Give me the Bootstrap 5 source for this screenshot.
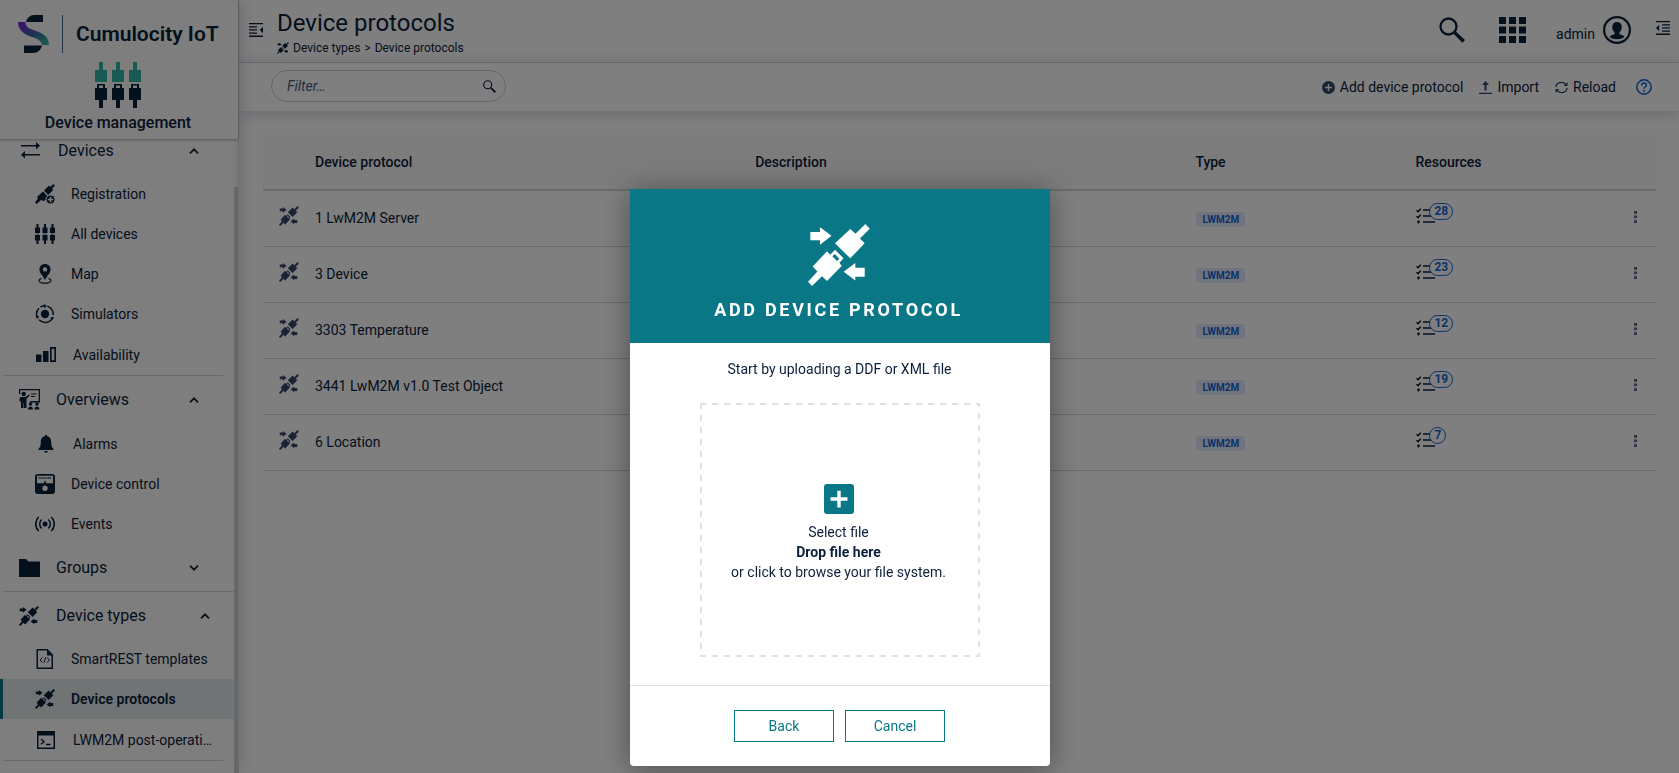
<!DOCTYPE html>
<html lang="en">
<head>
<meta charset="utf-8">
<meta name="viewport" content="width=device-width, initial-scale=1">
<title>Device protocols - Cumulocity IoT</title>
<link href="https://cdn.jsdelivr.net/npm/bootstrap@5.3.0/dist/css/bootstrap.min.css" rel="stylesheet">
<style>
  :root { --ink: #0b213b; --muted: #34496b; --teal: #0a7787; --line: #dcdee5; --blue: #1264d0; }
  body { font-family: Roboto, "Liberation Sans", sans-serif; font-size: 14px; line-height: 20px; color: var(--ink); height: 100vh; overflow: hidden; background: #fff; }
  svg { display: block; fill: currentColor; flex: none; }
  a { color: inherit; text-decoration: none; }
  button { color: inherit; }

  /* navigator */
  .navigator { width: 239px; border-right: 1px solid #d5d8e4; box-shadow: 0 0 16px rgba(30,50,90,.22); z-index: 3; background: #fdfdfd; }
  .brand-block { height: 139px; padding: 15px 2px 0 0; box-shadow: 0 1px 3px rgba(0,0,0,.3); z-index: 1; position: relative; }
  .brand-line { height: 38px; padding-left: 18px; gap: 13px; }
  .brand-line .rule { width: 1px; height: 38px; background: #45698f; }
  .brand-name { font-size: 21px; line-height: 34px; font-weight: 600; }
  .app-name { font-size: 16px; line-height: 24px; font-weight: 500; margin-top: 3px; }
  .nav-scroll { overflow: hidden; padding: 38px 0 12px; }
  .track { width: 4px; padding-top: 48px; background: #f4f5f9; }
  .thumb { background: #cccfd6; height: 100%; }
  .group-head { height: 47px; font-size: 16px; padding: 0 24px 0 16px; border: 0; background: none; width: 100%; text-align: left; }
  .group-head .pic { width: 37px; }
  .group-head .pic.inset { width: 39px; padding-left: 2px; }
  .nav-group { border-bottom: 1px solid #d4d5d9; margin: 0 11px 0 3px; }
  .nav-group.wide { margin-right: 0; }
  .nav-group.wide .group-head { padding-right: 35px; }
  .nav-group.wide + .nav-group .group-head { padding-right: 13px; }
  .nav-entry { height: 40px; padding-left: 35px; margin-left: -3px; margin-right: -11px; }
  .nav-group.wide .nav-entry { margin-right: 0; }
  .nav-entry .pic { width: 36px; }
  .nav-entry.tall { height: 41px; padding-left: 36px; }
  .nav-entry.tall .pic { width: 37px; }
  .nav-entry.current { background: #e0e8ea; border-left: 3px solid var(--teal); padding-left: 32px; font-weight: 600; }

  /* header and toolbar */
  .app-header { height: 63px; border-bottom: 1px solid var(--line); padding: 0 9px 2px 10px; }
  .drawer-left { margin-right: 14px; padding-bottom: 2px; }
  .tools { gap: 34px; padding-right: 30px; }
  .account { margin-right: 25px; }
  .page-title { font-size: 24px; line-height: 30px; font-weight: 400; margin: 8px 0 0; }
  .crumbs { font-size: 12px; line-height: 20px; }
  .icon-btn { background: none; border: 0; padding: 0; }
  .toolbar { height: 48px; padding: 0 27px 0 32px; box-shadow: 0 2px 14px rgba(30,50,90,.22); z-index: 1; position: relative; background: #fff; }
  .filter { width: 235px; height: 32px; border: 1px solid #c8ccda; border-radius: 16px; padding: 0 9px 0 15px; margin-top: -2px; }
  .filter input { border: 0; outline: 0; background: none; min-width: 0; padding: 0; }
  .filter input::placeholder { font-style: italic; color: #45607f; opacity: 1; }
  .action { gap: 5px; }
  .help { margin-left: 20px; color: var(--blue); }
  .action svg, .row-icon { color: var(--muted); }

  /* table */
  .content { padding: 24px 23px 0 24px; background: #fff; }
  .protocols { table-layout: fixed; margin: 0; --bs-table-bg: transparent; color: var(--ink); }
  .protocols .c-icon { width: 36px; }
  .protocols .c-wide { width: 31.6%; }
  .protocols .c-small { width: 15.8%; }
  .protocols > :not(caption) > * > * { padding: 0 16px; height: 56px; vertical-align: middle; border-bottom: 1px solid #d4d6dc; color: var(--ink); }
  .protocols > thead > tr > th { height: 55px; font-weight: 500; border-bottom: 2px solid #d3d3e0; background: #f9f9f9; }
  .protocols > tbody > tr > td:last-child, .protocols > tbody > tr > td:first-child { padding-right: 0; }
  .protocols > tbody > tr > td:last-child { padding-left: 14px; }
  .kind { font-size: 10px; line-height: 15px; font-weight: 700; color: var(--blue); background: #e0e9f8; border-radius: 3px; padding: 0 6px; display: inline-block; margin-left: 1px; }
  .res { width: 20px; height: 16px; position: relative; margin: -4px 0 0 1px; }
  .count { position: absolute; left: 13px; top: -5px; height: 17px; min-width: 16px; border: 1px solid var(--blue); border-radius: 9px; background: #fff; color: var(--blue); font-size: 12px; line-height: 15px; font-weight: 700; padding: 0 4px; text-align: center; }
  .more { color: #5a6a85; }

  /* dialog */
  .modal-dialog { width: 420px; max-width: 420px; margin-top: 189px; margin-bottom: 0; }
  .modal-content { border: 0; border-radius: 0 0 4px 4px; box-shadow: 0 3px 30px rgba(0,0,0,.4); color: var(--ink); }
  .modal-header { height: 154px; background: var(--teal); color: #fff; padding: 35px 2px 0 0; border: 0; border-radius: 0; gap: 12px; }
  .modal-title { font-size: 18px; line-height: 24px; font-weight: 700; letter-spacing: .15em; text-transform: uppercase; }
  .modal-body { padding: 16px 70px 28px; }
  .drop { height: 254px; margin-top: 24px; padding: 5px 2px 0 0; cursor: pointer; }
  .modal-footer { height: 81px; border-top: 1px solid #dfe1e7; padding: 0; gap: 11px; }
  .modal-footer .btn { --bs-btn-color: var(--teal); --bs-btn-border-color: var(--teal); --bs-btn-hover-bg: var(--teal); --bs-btn-hover-color: #fff; width: 100px; height: 32px; border-radius: 0; margin: 0; padding: 0; font-size: 14px; line-height: 20px; }
</style>
</head>
<body class="d-flex">

<svg width="0" height="0" class="position-absolute" aria-hidden="true">
  <symbol id="i-protocol" viewBox="0 0 62 62">
    <path fill-rule="evenodd" d="M2.3 8H12V3.3l11.5 8.5L12 20.7v-4.4H2.3zM42.3 5l5.2 4.8L57.3 0l4.5 4.7-9.9 9.8 4.8 4.8-14.4 15L27 19.3zM19 27.3l3.3 3.4 4.7-5 8.5 8.6-4 4.5 2.2 3.2L19 57l-5-4.7L4 62l-4-4.2 9.4-10.4-4.7-5zM26.7 30l-2.4 2.3 4.7 4.8 2.4-2.4zM56.7 43.7h-9.4V39l-11.6 8.7 11.6 8.7v-3.7h9.4z"/>
  </symbol>
  <symbol id="i-up" viewBox="0 0 10 6"><path d="M1 5.3l4-4 4 4" fill="none" stroke="currentColor" stroke-width="1.7"/></symbol>
  <symbol id="i-down" viewBox="0 0 10 6"><path d="M1 .7l4 4 4-4" fill="none" stroke="currentColor" stroke-width="1.7"/></symbol>
  <symbol id="i-search" viewBox="0 0 26 26"><circle cx="9.5" cy="9.500" r="8" fill="none" stroke="currentColor" stroke-width="2.300"/><path d="M14.500 16.800l2.300-2.300L26 23l-2.600 2.800z"/></symbol>
  <symbol id="i-list" viewBox="0 0 20 16"><path d="M7 2h12M7 8h12M7 14h12" stroke="currentColor" stroke-width="1.6"/><path d="M.5 2.2l1.6 1.4L4.8.8M.5 8.2l1.6 1.4 2.7-2.8" fill="none" stroke="currentColor" stroke-width="1.5"/><circle cx="2.5" cy="14" r="1.4"/></symbol>
  <symbol id="i-dots" viewBox="0 0 3 12"><path d="M0 0h3v2.7H0zM0 4.6h3v2.7H0zM0 9.2h3v2.7H0z"/></symbol>
  <symbol id="i-drawer" viewBox="0 0 14 14"><path d="M0 0h14v1.3H0zM0 3.2h8v1.300H0zM0 6.3h8v1.300H0zM0 9.4h8v1.300H0zM0 12.6h14v1.3H0zM14 3.800v6.400L10.800 7z"/></symbol>
</svg>

<aside class="navigator d-flex flex-column flex-shrink-0">
  <div class="brand-block flex-shrink-0">
    <div class="brand-line d-flex align-items-center">
      <svg width="31" height="38" viewBox="0 0 31 38" aria-hidden="true">
        <defs><linearGradient id="wave" x1="0" y1="0" x2="1" y2="1"><stop offset="0" stop-color="#7a1fe0"/><stop offset=".5" stop-color="#4063a8"/><stop offset="1" stop-color="#2fc09a"/></linearGradient></defs>
        <path d="M8 7C9 3 12 0 16 0h9v7z"/>
        <path d="M0 7h7.500c0 5 3.500 6.500 8 8C24 18 31 21 31 30h-7c-1-5-5-6.500-10-8C6 19.500 0 15 0 7z" fill="url(#wave)"/>
        <path d="M6 30.500h18c-1 4-4 7.500-9 7.500H6z"/>
      </svg>
      <span class="rule"></span>
      <span class="brand-name">Cumulocity IoT</span>
    </div>
    <svg class="mx-auto mt-2" width="46" height="47" viewBox="0 0 46 47" aria-hidden="true">
      <g fill="#2fb6a6"><path d="M0 9h4V1h4v8h4v12H0zM17 9h4V1h4v8h4v12H17zM34 9h4V1h4v8h4v12H34z"/></g>
      <path fill-rule="evenodd" d="M0 27h2v-4h8v4h2v12H8v8H4v-8H0zM4 24.500V27h4v-2.500zM17 27h2v-4h8v4h2v12h-4v8h-4v-8h-4zM21 24.500V27h4v-2.500zM34 27h2v-4h8v4h2v12h-4v8h-4v-8h-4zM38 24.500V27h4v-2.500z"/>
    </svg>
    <div class="app-name text-center">Device management</div>
  </div>

  <div class="d-flex flex-grow-1 overflow-hidden">
    <nav class="nav-scroll flex-grow-1" id="nav" aria-label="Main">
      <div class="nav-group">
        <button class="group-head d-flex align-items-center" type="button" aria-expanded="true">
          <span class="pic inset"><svg width="19" height="17" viewBox="0 0 19 17"><path d="M0 3h15V0l4 3.700L15 7.500V4.500H0zM19 12H4V9l-4 3.800 4 3.700v-3h15z"/></svg></span>
          <span class="flex-grow-1">Devices</span><svg width="10" height="6"><use href="#i-up"/></svg>
        </button>
        <a href="#" class="nav-entry d-flex align-items-center"><span class="pic">
          <svg width="20" height="20" viewBox="0 0 20 20"><path d="M18.500 0L20 1.500l-2.800 3 1 1.500-5 5L9 6.500l4.800-4.800 1.700 1zM8 7.500l4 4.300-1 4-3 1.500-1.500-1.500L1.500 20 0 18.500l3-4L2 13z"/><circle cx="15.500" cy="15.500" r="4.500" stroke="#fdfdfd"/><path d="M15.500 12.800v5.400M12.800 15.500h5.400" stroke="#fdfdfd" stroke-width="1.600"/></svg></span>Registration</a>
        <a href="#" class="nav-entry d-flex align-items-center"><span class="pic">
          <svg width="20" height="20" viewBox="0 0 20 20"><path d="M0 3.500h1.500V0h2v3.500H5V9H0zM7.500 3.500H9V0h2v3.500h1.500V9h-5zM15 3.500h1.500V0h2v3.500H20V9h-5zM0 11h5v5.500H3.500V20h-2v-3.500H0zM7.500 11h5v5.500H11V20H9v-3.500H7.500zM15 11h5v5.500h-1.500V20h-2v-3.500H15z"/><path d="M1 10h3M8.500 10h3M16 10h3" stroke="currentColor" stroke-width=".7"/></svg></span>All devices</a>
        <a href="#" class="nav-entry d-flex align-items-center"><span class="pic">
          <svg width="20" height="20" viewBox="0 0 20 20"><path fill-rule="evenodd" d="M10 0c3.200 0 5.600 2.400 5.600 5.500C15.600 9 12 11.500 10 16c-2-4.500-5.600-7-5.600-10.500C4.400 2.400 6.800 0 10 0zm0 3.200a2.200 2.200 0 100 4.400 2.200 2.200 0 000-4.400z"/><path d="M6.500 14.300C2.500 15.500 3.500 19.200 10 19.200s7.500-3.700 3.500-4.900" fill="none" stroke="currentColor" stroke-width="1.300"/></svg></span>Map</a>
        <a href="#" class="nav-entry d-flex align-items-center"><span class="pic">
          <svg width="20" height="20" viewBox="0 0 20 20"><circle cx="10" cy="10" r="4.200"/><g fill="none" stroke="currentColor" stroke-width="1.500"><path d="M2.200 13A8.200 8.200 0 014 4.200M5.500 3A8.300 8.300 0 0110 1.800M12.500 2.200a8.200 8.200 0 015.600 9M17.500 14A8.300 8.300 0 014 15.800"/></g><path d="M9 0l3 2-3 2.300zM.500 12l3.500.3-1.700 3zM15.500 13l4 .5-3 3z"/></svg></span>Simulators</a>
        <a href="#" class="nav-entry tall d-flex align-items-center"><span class="pic">
          <svg width="20" height="15" viewBox="0 0 20 15"><path fill-rule="evenodd" d="M0 7.500h5.500V15H0zM7 4h5.500v11H7zM14 0h6v15h-6zM15.700 1.700v11.600h2.600V1.700z"/></svg></span>Availability</a>
      </div>

      <div class="nav-group wide">
        <button class="group-head d-flex align-items-center" type="button" aria-expanded="true">
          <span class="pic"><svg width="21" height="21" viewBox="0 0 21 21"><path fill-rule="evenodd" d="M0 0h21v13.500h-10V12h8.700V1.300H1.300V5H0z"/><circle cx="4.700" cy="5" r="2.200"/><path d="M1.500 8h5l3.500-2.500.8 1-3.300 3.300V19H5v-5h-.5v5H2v-6.500H.500V9.500zM12 4.500h5.500v1H12zM12 7h4v1h-4z"/><circle cx="11.500" cy="15" r="1.700"/><circle cx="18" cy="15" r="1.700"/><path d="M9 20.500c0-4 5-4 5 0zM15.500 20.500c0-4 5-4 5 0z"/></svg></span>
          <span class="flex-grow-1">Overviews</span><svg width="10" height="6"><use href="#i-up"/></svg>
        </button>
        <a href="#" class="nav-entry tall d-flex align-items-center"><span class="pic">
          <svg width="20" height="20" viewBox="0 0 20 20"><path d="M10 1c.8 0 1.300.5 1.300 1.300C14 3 15.200 5 15.200 8c0 4 .8 5.500 2.300 7v1h-15v-1C4 13.500 4.800 12 4.800 8c0-3 1.200-5 3.900-5.700C8.700 1.500 9.200 1 10 1zM8.200 17h3.600c0 2.300-3.600 2.300-3.600 0z"/></svg></span>Alarms</a>
        <a href="#" class="nav-entry d-flex align-items-center"><span class="pic">
          <svg width="20" height="20" viewBox="0 0 20 20"><path fill-rule="evenodd" d="M3 0h14a3 3 0 013 3v14a3 3 0 01-3 3H3a3 3 0 01-3-3V3a3 3 0 013-3zM2 1.800v7.400h6.500L10 6.500l1.500 2.700H18V1.800zM10 11.500a2.700 2.700 0 100 5.400 2.700 2.700 0 000-5.400z"/><path d="M3.500 4h13" stroke="currentColor" stroke-width="1.600" stroke-dasharray="1.200 .7"/></svg></span>Device control</a>
        <a href="#" class="nav-entry d-flex align-items-center"><span class="pic">
          <svg width="20" height="16" viewBox="0 0 20 16"><circle cx="10" cy="8" r="2.500"/><g fill="none" stroke="currentColor" stroke-width="1.600"><path d="M6.700 3.500a6 6 0 000 9M13.300 3.500a6 6 0 010 9M3.600 1a10 10 0 000 14M16.400 1a10 10 0 010 14"/></g></svg></span>Events</a>
        <button class="group-head d-flex align-items-center" type="button" aria-expanded="false">
          <span class="pic"><svg width="21" height="18" viewBox="0 0 21 18"><path d="M0 0h7l2.500 2.500H21V18H0z"/></svg></span>
          <span class="flex-grow-1">Groups</span><svg width="10" height="6"><use href="#i-down"/></svg>
        </button>
      </div>

      <div class="nav-group">
        <button class="group-head d-flex align-items-center" type="button" aria-expanded="true">
          <span class="pic"><svg width="20" height="20"><use href="#i-protocol"/></svg></span>
          <span class="flex-grow-1">Device types</span><svg width="10" height="6"><use href="#i-up"/></svg>
        </button>
        <a href="#" class="nav-entry d-flex align-items-center"><span class="pic">
          <svg width="20" height="20" viewBox="0 0 20 20"><path fill-rule="evenodd" d="M1.500 0h11l5.500 5.500V20H1.500zM3 1.500v17h13.500v-12H12v-5z"/><path d="M7.300 8.500L5.200 11l2.100 2.500M12.200 8.500l2.100 2.500-2.100 2.500M10.500 8.200l-1.500 5.600" fill="none" stroke="currentColor"/></svg></span><span class="text-nowrap">SmartREST templates</span></a>
        <a href="#" class="nav-entry current d-flex align-items-center" aria-current="page"><span class="pic">
          <svg width="20" height="20"><use href="#i-protocol"/></svg></span>Device protocols</a>
        <a href="#" class="nav-entry tall d-flex align-items-center"><span class="pic">
          <svg width="19" height="18" viewBox="0 0 19 18"><path fill-rule="evenodd" d="M1 0h18v18H1zM2.500 4.500v12h15v-12z"/><path d="M5 8l3 2.700-3 2.600M10 13.500h4.500" fill="none" stroke="currentColor" stroke-width="1.400"/></svg></span><span class="text-nowrap">LWM2M post-operati…</span></a>
      </div>
    </nav>
    <div class="track flex-shrink-0"><div class="thumb"></div></div>
  </div>
</aside>

<main class="flex-grow-1 d-flex flex-column overflow-hidden">
  <header class="app-header d-flex align-items-center flex-shrink-0">
    <button class="icon-btn drawer-left" type="button" aria-label="Toggle navigator"><svg width="14" height="14"><use href="#i-drawer"/></svg></button>
    <div class="align-self-start flex-grow-1">
      <h1 class="page-title">Device protocols</h1>
      <div class="crumbs d-flex align-items-center"><svg class="me-1" width="12" height="12"><use href="#i-protocol"/></svg><a href="#">Device types</a><span class="mx-1">&gt;</span><span>Device protocols</span></div>
    </div>
    <div class="tools d-flex align-items-center">
      <button class="icon-btn" type="button" aria-label="Search"><svg width="26" height="26"><use href="#i-search"/></svg></button>
      <button class="icon-btn" type="button" aria-label="Applications"><svg width="27" height="26" viewBox="0 0 27 26"><path d="M0 0h7v7H0zM10 0h7v7h-7zM20 0h7v7h-7zM0 9.500h7v7H0zM10 9.500h7v7h-7zM20 9.500h7v7h-7zM0 19h7v7H0zM10 19h7v7h-7zM20 19h7v7h-7z"/></svg></button>
    </div>
    <button class="icon-btn account d-flex align-items-center" type="button"><span class="me-2 pt-2">admin</span>
      <svg width="28" height="28" viewBox="0 0 28 28"><circle cx="14" cy="14" r="12.900" fill="none" stroke="currentColor" stroke-width="2.200"/><path d="M14 6c3 0 4.800 2 4.800 5 0 2.500-1 4-2.300 5.300v2c2 .7 4.500 1 4.800 2.700-3.300 3-11.300 3-14.600 0 .3-1.700 2.800-2 4.800-2.700v-2C10.200 15 9.200 13.500 9.200 11c0-3 1.800-5 4.800-5z"/></svg></button>
    <button class="icon-btn pb-1" type="button" aria-label="Toggle details"><svg width="14" height="14" viewBox="0 0 14 14"><path d="M0 0h14v1.300H0zM6 3.200h8v1.300H6zM6 6.300h8v1.300H6zM6 9.400h8v1.300H6zM0 12.600h14v1.300H0zM0 7l3.200-3.200v6.400z"/></svg></button>
  </header>

  <div class="toolbar d-flex align-items-center flex-shrink-0">
    <label class="filter d-flex align-items-center"><input class="flex-grow-1" type="text" placeholder="Filter…" aria-label="Filter"><svg width="13" height="13" viewBox="0 0 26 26"><use href="#i-search"/></svg></label>
    <button class="icon-btn action d-flex align-items-center ms-auto" type="button"><svg width="13" height="13" viewBox="0 0 13 13"><path fill-rule="evenodd" d="M6.500 0a6.500 6.500 0 110 13 6.500 6.500 0 010-13zM5.800 3v2.800H3v1.400h2.800V10h1.400V7.200H10V5.800H7.200V3z"/></svg>Add device protocol</button>
    <button class="icon-btn action d-flex align-items-center ms-3" type="button"><svg width="13" height="13" viewBox="0 0 13 13"><path d="M6.500 0l3.500 4H7.500v5.500h-2V4H3zM0 11.700h13V13H0z"/></svg>Import</button>
    <button class="icon-btn action d-flex align-items-center ms-3" type="button"><svg width="13" height="13" viewBox="0 0 13 13"><path d="M1 6C1 1.500 7.500-.5 10.800 3.500M12 7c0 4.500-6.500 6.500-9.800 2.500" fill="none" stroke="currentColor" stroke-width="1.300"/><path d="M12.500 1v4H8.700zM.500 12V8h3.800z"/></svg>Reload</button>
    <button class="icon-btn help" type="button" aria-label="Help"><svg width="16" height="16" viewBox="0 0 16 16"><circle cx="8" cy="8" r="7.200" fill="none" stroke="currentColor" stroke-width="1.500"/><path d="M5.700 6.400c0-3.200 4.700-3.200 4.700-.4C10.400 7.800 8 7.700 8 9.800" fill="none" stroke="currentColor" stroke-width="1.500"/><circle cx="8" cy="12" r="1"/></svg></button>
  </div>

  <div class="content flex-grow-1">
    <table class="table protocols">
      <thead><tr><th class="c-icon"></th><th class="c-wide">Device protocol</th><th class="c-wide">Description</th><th class="c-small">Type</th><th class="c-small">Resources</th><th></th></tr></thead>
      <tbody id="rows"></tbody>
    </table>
  </div>
</main>

<div class="modal-backdrop show"></div>
<div class="modal d-block overflow-hidden" tabindex="-1" role="dialog" aria-modal="true" aria-labelledby="dlg-title">
  <div class="modal-dialog">
    <div class="modal-content">
      <div class="modal-header d-flex flex-column justify-content-start">
        <svg width="62" height="62"><use href="#i-protocol"/></svg>
        <h2 class="modal-title" id="dlg-title">Add device protocol</h2>
      </div>
      <div class="modal-body text-center">
        <div>Start by uploading a DDF or XML file</div>
        <label class="drop position-relative d-flex flex-column align-items-center justify-content-center">
          <svg class="position-absolute top-0 start-0 w-100 h-100" aria-hidden="true"><rect x="1" y="1" width="278" height="252" fill="none" stroke="#dfe1e8" stroke-width="2" stroke-dasharray="6 6" stroke-dashoffset="1"/></svg>
          <svg class="mb-2" width="30" height="30" viewBox="0 0 30 30"><path fill="#0a7787" fill-rule="evenodd" d="M3 0h24a3 3 0 013 3v24a3 3 0 01-3 3H3a3 3 0 01-3-3V3a3 3 0 013-3zM13.300 6.700v6.600H6.500v3.400h6.800v6.800h3.400v-6.800h6.800v-3.400h-6.800V6.700z"/></svg>
          <span>Select file</span>
          <strong>Drop file here</strong>
          <span>or click to browse your file system.</span>
          <input type="file" class="visually-hidden">
        </label>
      </div>
      <div class="modal-footer justify-content-center">
        <button type="button" class="btn btn-outline-primary">Back</button>
        <button type="button" class="btn btn-outline-primary">Cancel</button>
      </div>
    </div>
  </div>
</div>

<script src="https://cdn.jsdelivr.net/npm/bootstrap@5.3.0/dist/js/bootstrap.bundle.min.js"></script>
<script>
  const protocols = [['1 LwM2M Server', 28], ['3 Device', 23], ['3303 Temperature', 12], ['3441 LwM2M v1.0 Test Object', 19], ['6 Location', 7]];
  document.getElementById('rows').innerHTML = protocols.map(([name, count]) => `
    <tr>
      <td><svg class="row-icon mb-1" width="20" height="20"><use href="#i-protocol"/></svg></td>
      <td>${name}</td><td></td>
      <td><span class="kind">LWM2M</span></td>
      <td><div class="res"><svg width="20" height="16"><use href="#i-list"/></svg><span class="count">${count}</span></div></td>
      <td><button class="icon-btn more" type="button" aria-label="Actions for ${name}"><svg width="3" height="12"><use href="#i-dots"/></svg></button></td>
    </tr>`).join('');
  // The navigator opens scrolled to the active entry at its end.
  const nav = document.getElementById('nav');
  nav.scrollTop = nav.scrollHeight;
</script>
</body>
</html>
